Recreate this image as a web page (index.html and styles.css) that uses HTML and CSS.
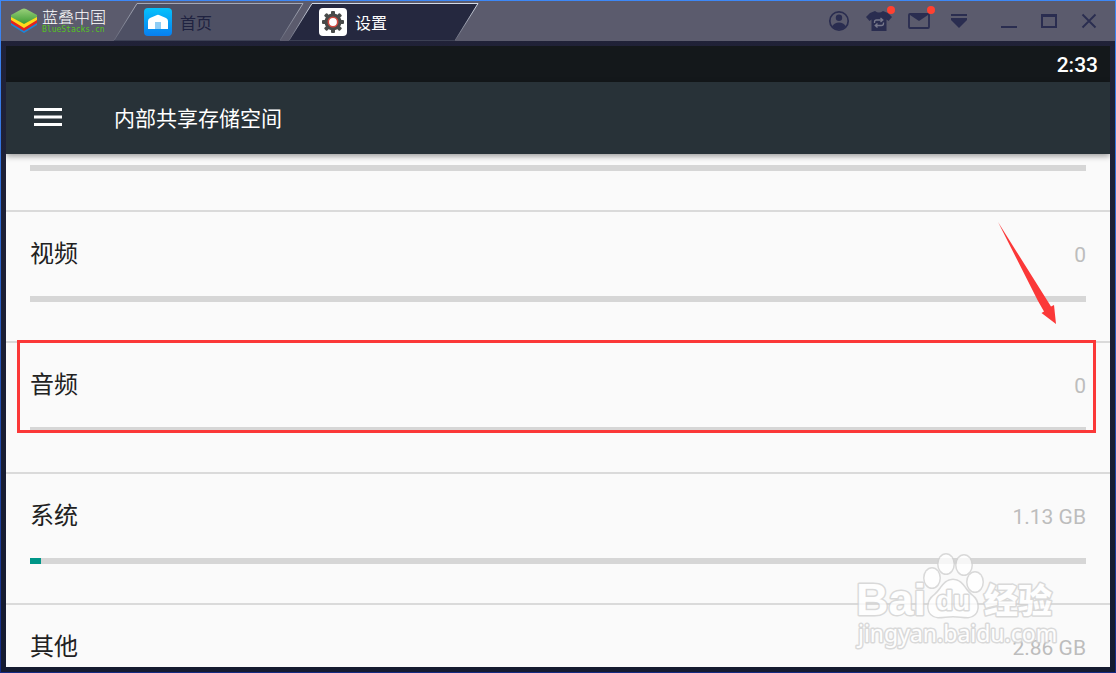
FILE: index.html
```html
<!DOCTYPE html>
<html lang="zh-CN">
<head>
    <meta charset="UTF-8">
    <meta name="viewport" content="width=device-width, initial-scale=1.0">
    <title>设置</title>
    <link rel="stylesheet" href="styles.css">
</head>
<body>
<div class="window">
    <header class="titlebar">
        <div class="logo">
            <svg width="28" height="26" viewBox="0 0 28 26">
                <defs>
                    <linearGradient id="green" x1="0" y1="0" x2="0" y2="1">
                        <stop offset="0" stop-color="#9ad07a"/>
                        <stop offset="1" stop-color="#3c9a34"/>
                    </linearGradient>
                </defs>
                <path d="M1 15 L14 9 L27 15 V17 L14 25 L1 17 Z" fill="#1b86d8"/>
                <path d="M1 12 L14 7 L27 12 V15 L14 23 L1 15 Z" fill="#e2231f"/>
                <path d="M1 9 L14 4 L27 9 V12 L14 20 L1 12 Z" fill="#ffd91c"/>
                <path d="M1 7 L12 1 Q14 0 16 1 L27 7 V9 L14 16 L1 9 Z" fill="url(#green)"/>
            </svg>
            <div class="logo-text">
                <span class="logo-cn">蓝叠中国</span>
                <span class="logo-en">BlueStacks.cn</span>
            </div>
        </div>
        <nav class="tabs">
            <button class="tab">
                <svg class="tab-shape" width="190" height="39" viewBox="0 0 190 39">
                    <defs>
                        <linearGradient id="edge" gradientUnits="userSpaceOnUse" x1="0" y1="2" x2="0" y2="38">
                            <stop offset="0" stop-color="#a5a9b7"/>
                            <stop offset="1" stop-color="#666879"/>
                        </linearGradient>
                        <linearGradient id="edge-active" gradientUnits="userSpaceOnUse" x1="0" y1="2" x2="0" y2="38">
                            <stop offset="0" stop-color="#d3dae6"/>
                            <stop offset="1" stop-color="#666879"/>
                        </linearGradient>
                    </defs>
                    <path d="M0 38.5 L23 1.5 H189 L166 38.5 Z" fill="#4e5064"/>
                    <path d="M0 38.5 L23 1.5 H189 L166 38.5" fill="none" stroke="url(#edge)"/>
                    <path d="M0 38.5 H166" stroke="#3c4054"/>
                </svg>
                <svg class="tab-icon" width="28" height="28" viewBox="0 0 28 28">
                    <defs>
                        <linearGradient id="blue" x1="0" y1="0" x2="0" y2="1">
                            <stop offset="0" stop-color="#06c1fb"/>
                            <stop offset="1" stop-color="#087ff0"/>
                        </linearGradient>
                    </defs>
                    <rect width="28" height="28" rx="4" fill="url(#blue)"/>
                    <path d="M4 13 Q4 11 6 10 L13 7 Q14 6.600 15 7 L22 10 Q24 11 24 13 V21 H4 Z" fill="#fff"/>
                    <rect x="11" y="14" width="6" height="7" fill="#8fcdf5"/>
                </svg>
                <span>首页</span>
            </button>
            <button class="tab tab-active">
                <svg class="tab-shape" width="190" height="39" viewBox="0 0 190 39">
                    <path d="M0 38.5 L23 1.5 H189 L166 38.5 Z" fill="#25283f"/>
                    <path d="M0 38.5 L23 1.5 H189 L166 38.5" fill="none" stroke="url(#edge-active)"/>
                    <path d="M0 38.5 H166" stroke="#3c4054"/>
                </svg>
                <svg class="tab-icon" width="28" height="28" viewBox="0 0 28 28">
                    <rect width="28" height="28" rx="4" fill="#fff"/>
                    <g fill="#484a49">
                        <circle cx="14" cy="14" r="8.500"/>
                        <g id="teeth">
                            <rect x="12" y="3" width="4" height="22" rx="1"/>
                            <rect x="3" y="12" width="22" height="4" rx="1"/>
                        </g>
                        <use href="#teeth" transform="rotate(45 14 14)"/>
                    </g>
                    <circle cx="14" cy="14" r="4.700" fill="#fff" stroke="#d0483e" stroke-width="1.600"/>
                </svg>
                <span>设置</span>
            </button>
        </nav>
        <div class="tools">
            <button class="tool" aria-label="Account">
                <svg width="26" height="26" viewBox="0 0 26 26">
                    <circle cx="13" cy="13" r="9.200" fill="none" stroke="#2a2d50" stroke-width="1.700"/>
                    <circle cx="13" cy="9.800" r="3.200" fill="#2a2d50"/>
                    <path d="M6 18.500 Q8.500 14.500 13 14.500 T20 18.500 Q17.500 21.500 13 21.500 T6 18.500 Z" fill="#2a2d50"/>
                </svg>
            </button>
            <button class="tool has-badge" aria-label="Theme">
                <svg width="26" height="26" viewBox="0 0 26 26">
                    <path d="M9 3 Q13 6 17 3 L22 5 L26 9 L22.500 13 L20.500 11.500 V23 H5.500 V11.500 L3.500 13 L0 9 L4 5 Z" fill="#2a2d50"/>
                    <path d="M8.500 15 V14 Q8.500 12 10.500 12 H16 M14.500 10 L16.800 12 L14.500 14 M17.500 14.500 V15.500 Q17.500 17.500 15.500 17.500 H10 M11.500 15.500 L9.200 17.500 L11.500 19.500" fill="none" stroke="#77788b" stroke-width="1.300"/>
                </svg>
            </button>
            <button class="tool has-badge" aria-label="Messages">
                <svg width="26" height="26" viewBox="0 0 26 26">
                    <rect x="3" y="6" width="20" height="14" rx="1" fill="none" stroke="#2a2d50" stroke-width="1.800"/>
                    <path d="M4 5.500 H22 V7 L13 13 L4 7 Z" fill="#2a2d50"/>
                </svg>
            </button>
            <button class="tool" aria-label="More">
                <svg width="26" height="26" viewBox="0 0 26 26">
                    <path d="M5 6 H21 V8 H5 Z M5 10 H21 V12 L13 20 L5 12 Z" fill="#2a2d50"/>
                </svg>
            </button>
        </div>
        <div class="tools window-tools">
            <button class="tool" aria-label="Minimize">
                <svg width="26" height="26" viewBox="0 0 26 26"><path d="M5 18 H21 V20 H5 Z" fill="#2a2d50"/></svg>
            </button>
            <button class="tool" aria-label="Maximize">
                <svg width="26" height="26" viewBox="0 0 26 26"><path d="M5 6 H21 V20 H5 Z M7 9 V18 H19 V9 Z" fill="#2a2d50" fill-rule="evenodd"/></svg>
            </button>
            <button class="tool" aria-label="Close">
                <svg width="26" height="26" viewBox="0 0 26 26"><path d="M6.500 6.500 L19.500 19.500 M19.500 6.500 L6.500 19.500" stroke="#2a2d50" stroke-width="1.800"/></svg>
            </button>
        </div>
    </header>

    <main class="screen">
        <div class="statusbar">2:33</div>
        <div class="appbar">
            <button class="menu" aria-label="Menu">
                <svg width="28" height="18" viewBox="0 0 28 18"><path d="M0 0 H28 V3 H0 Z M0 7.500 H28 V10.500 H0 Z M0 15 H28 V18 H0 Z" fill="#fff"/></svg>
            </button>
            <h1>内部共享存储空间</h1>
        </div>
        <div class="list">
            <section class="row row-cut">
                <div class="bar"></div>
            </section>
            <section class="row">
                <div class="line"><span class="label">视频</span><span class="size">0</span></div>
                <div class="bar"></div>
                <svg class="arrow" width="60" height="104" viewBox="0 0 60 104">
                    <path d="M2 0 L55 84.500 L58 83 L60 102 L45.500 91 L48 89.500 L42 79 Z" fill="#fb3838"/>
                </svg>
            </section>
            <section class="row">
                <div class="line"><span class="label">音频</span><span class="size">0</span></div>
                <div class="bar"></div>
                <div class="highlight"></div>
            </section>
            <section class="row">
                <div class="line"><span class="label">系统</span><span class="size">1.13 GB</span></div>
                <div class="bar"><div class="fill" style="width: 1%"></div></div>
            </section>
            <section class="row">
                <div class="line"><span class="label">其他</span><span class="size">2.86 GB</span></div>
                <div class="bar"></div>
            </section>
        </div>
        <svg class="watermark" width="208" height="104" viewBox="0 0 208 104">
            <g class="mark">
                <text class="mark-bai" x="6" y="68">Bai</text>
                <ellipse cx="82" cy="31" rx="7.500" ry="9.500"/>
                <ellipse cx="96" cy="17" rx="7.500" ry="9.500"/>
                <ellipse cx="114" cy="18" rx="7.500" ry="9.500"/>
                <ellipse cx="125" cy="35" rx="7.500" ry="9.500"/>
                <path d="M103 33 C112 33 114 42 121 48 C130 54 130 69 118 70 C112 70 109 69 103 69 C97 69 94 70 88 70 C76 69 76 54 85 48 C92 42 94 33 103 33 Z"/>
                <text class="mark-du" x="86" y="63">du</text>
                <text class="mark-cn" x="134" y="66">经验</text>
                <text class="mark-url" x="8" y="95">jingyan.baidu.com</text>
            </g>
        </svg>
    </main>
</div>
</body>
</html>
```
FILE: styles.css
```css
* {
    box-sizing: border-box;
}
body {
    margin: 0;
    font-family: Roboto, "Noto Sans CJK SC", sans-serif;
}
button {
    padding: 0;
    border: 0;
    background: none;
    font: inherit;
    cursor: pointer;
}
svg {
    display: block;
    flex: none;
}
.window {
    display: flex;
    flex-direction: column;
    height: 100vh;
    border: 1px solid transparent;
    background: linear-gradient(#212238, #151b30) padding-box,
                linear-gradient(#3d88f7, #142a82) border-box;
}

/* title bar */
.titlebar {
    display: flex;
    flex: none;
    height: 40px;
    padding-right: 6px;
    background: #5b5b6d;
}
.logo {
    display: flex;
    align-items: center;
    gap: 4px;
    width: 113px;
    padding-left: 9px;
}
.logo-text {
    display: flex;
    flex-direction: column;
    padding-top: 2px;
    white-space: nowrap;
}
.logo-cn {
    color: #fff;
    font-size: 16px;
    font-weight: 300;
    line-height: 16px;
}
.logo-en {
    color: #55c51e;
    font-family: "DejaVu Sans Mono", monospace;
    font-size: 8px;
    line-height: 8px;
}
.tabs {
    display: flex;
    flex: 1;
    padding-top: 1px;
}
.tab {
    position: relative;
    display: flex;
    align-items: center;
    gap: 8px;
    width: 175px;
    padding-left: 30px;
    padding-top: 1px;
    color: #1f2240;
    font-size: 16px;
}
.tab-active {
    color: #fff;
}
.tab-shape {
    position: absolute;
    top: 0;
    left: 0;
}
.tab-icon,
.tab span {
    position: relative;
}
.tools {
    display: flex;
}
.window-tools {
    margin-left: 10px;
}
.tool {
    position: relative;
    display: flex;
    align-items: center;
    justify-content: center;
    width: 40px;
}
.has-badge::after {
    content: "";
    position: absolute;
    top: 5px;
    right: 4px;
    width: 8px;
    height: 8px;
    border-radius: 50%;
    background: #ff4131;
}

/* android screen */
.screen {
    position: relative;
    display: flex;
    flex: 1;
    flex-direction: column;
    min-height: 0;
    margin: 5px;
    background: #fafafa;
    overflow: hidden;
}
.statusbar {
    flex: none;
    padding-top: 2px;
    padding-right: 12px;
    background: #14181b;
    color: #fff;
    font-size: 21px;
    font-weight: 500;
    line-height: 34px;
    text-align: right;
}
.appbar {
    position: relative;
    display: flex;
    flex: none;
    align-items: center;
    gap: 52px;
    height: 72px;
    padding-left: 28px;
    padding-bottom: 2px;
    background: #283238;
    box-shadow: 0 2px 6px rgba(0, 0, 0, 0.4);
}
.appbar h1 {
    margin: 0;
    color: #fff;
    font-size: 21px;
    font-weight: 400;
}
.list {
    flex: 1;
    min-height: 0;
    overflow: hidden;
}
.row {
    position: relative;
    height: 131px;
    padding: 24px 24px 0;
    border-bottom: 2px solid #dadada;
}
.row-cut {
    height: 58px;
    padding-top: 11px;
}
.line {
    display: flex;
    align-items: baseline;
    justify-content: space-between;
    height: 36px;
    margin-bottom: 24px;
    line-height: 36px;
}
.label {
    color: #212121;
    font-size: 24px;
}
.size {
    color: #bdbdbd;
    font-size: 21px;
}
.bar {
    height: 6px;
    background: #d6d6d6;
}
.fill {
    height: 100%;
    background: #009688;
}
.arrow {
    position: absolute;
    top: 10px;
    right: 54px;
}
.highlight {
    position: absolute;
    top: -3px;
    left: 11px;
    right: 14px;
    height: 93px;
    border: 3px solid #fb3838;
}

/* watermark */
.watermark {
    position: absolute;
    right: 52px;
    bottom: 16px;
    opacity: 0.8;
    pointer-events: none;
}
.mark {
    fill: #fff;
    stroke: #d2d2d2;
    stroke-width: 3px;
    stroke-linejoin: round;
    paint-order: stroke;
}
.mark-bai {
    font: 700 45px "Liberation Sans", sans-serif;
}
.mark-du {
    font: 700 28px "Liberation Sans", sans-serif;
}
.mark-cn {
    font: 900 34px "Noto Sans CJK SC", sans-serif;
}
.mark-url {
    font: 400 23px "Noto Sans", sans-serif;
}
```
